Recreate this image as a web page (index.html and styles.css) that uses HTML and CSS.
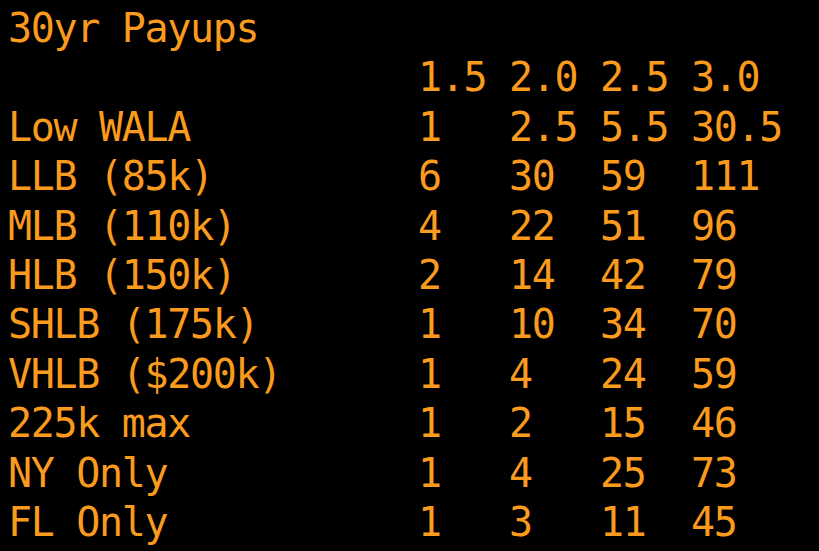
FILE: index.html
```html
<!DOCTYPE html>
<html lang="en">
<head>
    <meta charset="UTF-8">
    <meta name="viewport" content="width=device-width, initial-scale=1.0">
    <title>30yr Payups</title>
    <link rel="stylesheet" href="styles.css">
</head>
<body>
    <div class="screen">
        <div class="title">30yr Payups</div>
        <div class="grid">
            <div></div><div>1.5</div><div>2.0</div><div>2.5</div><div>3.0</div>
            <div>Low WALA</div><div>1</div><div>2.5</div><div>5.5</div><div>30.5</div>
            <div>LLB (85k)</div><div>6</div><div>30</div><div>59</div><div>111</div>
            <div>MLB (110k)</div><div>4</div><div>22</div><div>51</div><div>96</div>
            <div>HLB (150k)</div><div>2</div><div>14</div><div>42</div><div>79</div>
            <div>SHLB (175k)</div><div>1</div><div>10</div><div>34</div><div>70</div>
            <div>VHLB ($200k)</div><div>1</div><div>4</div><div>24</div><div>59</div>
            <div>225k max</div><div>1</div><div>2</div><div>15</div><div>46</div>
            <div>NY Only</div><div>1</div><div>4</div><div>25</div><div>73</div>
            <div>FL Only</div><div>1</div><div>3</div><div>11</div><div>45</div>
        </div>
    </div>
</body>
</html>
```

FILE: styles.css
```css
html, body {
    margin: 0;
    padding: 0;
    background-color: #000;
}
.screen {
    padding: 4px 8px 0 8px;
    font-family: "DejaVu Sans Mono", monospace;
    font-size: 40px;
    letter-spacing: -1.33px;
    line-height: 49.4px;
    color: #fa9b1e;
    white-space: nowrap;
}
.grid {
    display: grid;
    grid-template-columns: 410px 91px 91px 91px 1fr;
}
```
